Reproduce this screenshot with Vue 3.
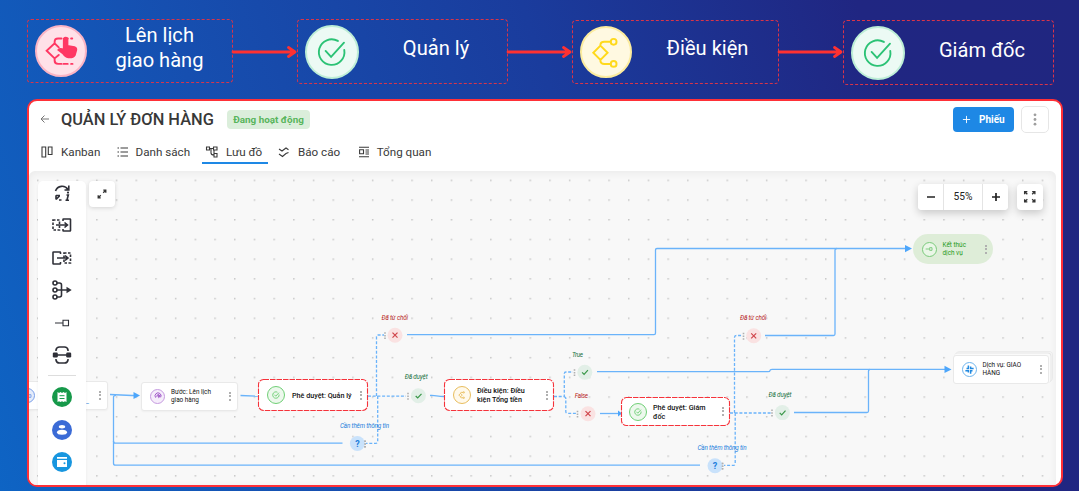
<template>
  <div class="page">
    <svg class="sprite">
      <symbol id="approve" viewBox="0 0 24 24">
        <path d="M21.2 10.5A9.6 9.6 0 1 1 16.4 3.7M7.2 11.2L11.3 15.6L21 5" />
      </symbol>
      <symbol id="branch" viewBox="0 0 24 24">
        <path d="M7.6 7L12.8 12.2L7.6 17.4L2.4 12.2ZM7.6 7V6Q8 4.2 10.3 4.2H15M7.6 17.4V18.4Q8 20.3 10.3 20.3H15" />
        <circle cx="17.2" cy="4.2" r="2.1" />
        <circle cx="17.2" cy="20.3" r="2.1" />
      </symbol>
      <symbol id="manual" viewBox="0 0 24 24">
        <path d="M7 17L1.2 11.5L7 6L10 9M7 6V5Q7 2.5 9.5 2.5H12M15 2.5H16.5M19 2.5H19.8M7 17V18.5Q7 21 9.5 21H12M7 17L10 14.5M13.5 21H16.5M19 21H20" />
        <path class="solid" d="M13.7 2.7Q15 1.2 16.3 2.7V8L21.4 8.8Q23 9.4 22.7 11L21.7 14.5Q20.5 16.5 17 16.2Q14.5 15.8 13.2 13.5L9.8 10.8Q11.2 9.4 13.7 11Z" />
      </symbol>
      <symbol id="spin" viewBox="0 0 24 24">
        <path d="M5 17A9 9 0 1 1 20 16M8 14Q9 6 15 8Q19 11 15 14M12 11L19 12L14 17Z" />
      </symbol>
      <symbol id="service" viewBox="0 0 24 24">
        <path d="M9 1V9H4M23 9H15V4M15 23V15H20M1 15H9V20" />
      </symbol>
      <symbol id="end" viewBox="0 0 24 24">
        <path d="M2 12H13M14 8H21V16H14Z" />
      </symbol>
    </svg>

    <header class="flow">
      <template v-for="(step, i) in steps" :key="i">
        <svg v-if="i" class="flow-arrow" viewBox="0 0 64 14">
          <path d="M0 7H62M55.5 2.5L62 7L55.5 11.5" />
        </svg>
        <div class="step" :class="'step-' + (i + 1)">
          <span class="step-icon" :class="step.icon">
            <svg><use :href="'#' + step.icon" /></svg>
          </span>
          <span class="step-name">{{ step.name }}</span>
        </div>
      </template>
    </header>

    <main class="window">
      <div class="title-row">
        <svg class="back" viewBox="0 0 12 12"><path d="M10 6H2M5.5 2.5L2 6L5.5 9.5" /></svg>
        <h1>QUẢN LÝ ĐƠN HÀNG</h1>
        <span class="badge">Đang hoạt động</span>
        <button class="primary">
          <svg viewBox="0 0 10 10"><path d="M5 1V9M1 5H9" /></svg>
          Phiếu
        </button>
        <button class="more">
          <svg viewBox="0 0 4 14">
            <circle cx="2" cy="2" r="1.5" /><circle cx="2" cy="7" r="1.5" /><circle cx="2" cy="12" r="1.5" />
          </svg>
        </button>
      </div>

      <nav class="tabs">
        <a class="tab kanban">
          <svg viewBox="0 0 14 12"><path d="M2 1H5.7V11H2ZM8.3 1H12V8.5H8.3Z" /></svg>Kanban
        </a>
        <a class="tab list">
          <svg viewBox="0 0 14 12"><path d="M4.5 2H12M4.5 6H12M4.5 10H12M1.5 2H3M1.5 6H3M1.5 10H3" /></svg>Danh sách
        </a>
        <a class="tab chart active">
          <svg viewBox="0 0 14 12">
            <path d="M1.5 1H4.5V4H1.5ZM8.5 1H12V4H8.5ZM9 7.5H12V11H9ZM4.5 2.5H8.5M6 2.5V7Q6 9 9 9M9 4V7.5" />
          </svg>Lưu đồ
        </a>
        <a class="tab report">
          <svg viewBox="0 0 14 12"><path d="M2 3L5 5L9 2L11.5 3.8M2 8L5.5 10.5L9 7.5L11.5 6.5" /></svg>Báo cáo
        </a>
        <a class="tab overview">
          <svg viewBox="0 0 14 12"><path d="M2 1.2H12M2.6 3.8H6.5V7.8H2.6ZM8.5 4H12M8.5 6H12M8.5 8H12M2 10.7H12" /></svg>Tổng quan
        </a>
      </nav>

      <section class="canvas">
        <svg class="layer" viewBox="29 171 1027 314">
          <defs>
            <pattern id="dots" x="37" y="179.6" width="19.7" height="19.7" patternUnits="userSpaceOnUse">
              <rect width="1.5" height="1.5" fill="#c6c6c6" />
            </pattern>
          </defs>
          <rect x="29" y="171" width="1027" height="314" fill="url(#dots)" />
          <path v-for="d in links" :key="d" class="link" :d="d" />
          <path v-for="d in branches" :key="d" class="link dashed" :d="d" />
        </svg>

        <div
          v-for="node in nodes"
          :key="node.id"
          class="node"
          :class="[node.kind, node.id]"
          :style="{ left: node.x - 29 + 'px', top: node.y - 171 + 'px', width: node.w + 'px', height: node.h + 'px' }"
        >
          <span class="node-icon" :class="node.icon"><svg><use :href="'#' + node.icon" /></svg></span>
          <span class="node-name">{{ node.name }}</span>
          <span class="kebab"></span>
        </div>

        <svg class="layer" viewBox="29 171 1027 314">
          <path v-for="d in heads" :key="d" class="head" :d="d" />
          <rect
            v-for="node in marked"
            :key="node.id"
            class="outline"
            :x="node.x + 0.5"
            :y="node.y + 0.5"
            :width="node.w - 1"
            :height="node.h - 1"
            rx="5"
          />
          <g v-for="o in outcomes" :key="o.x" class="outcome" :class="o.type">
            <path class="grip" :d="`M${o.gx} ${o.y - 3}v7`" />
            <circle :cx="o.x" :cy="o.y" r="7.5" />
            <path v-if="o.type === 'no'" :d="`M${o.x - 2.5} ${o.y - 2.5}l5 5m0 -5l-5 5`" />
            <path v-if="o.type === 'yes'" :d="`M${o.x - 2.7} ${o.y + 0.2}l2 2l3.8 -4.2`" />
            <text v-if="o.type === 'ask'" class="mark" :x="o.x" :y="o.y + 3.2">?</text>
            <path v-if="o.type === 'ask'" class="grip" :d="`M${o.gx} ${o.y - 3}v7`" />
            <text class="caption" :x="o.tx" :y="o.ty" :textLength="o.tw">{{ o.label }}</text>
          </g>
        </svg>

        <aside class="palette">
          <svg class="tool" viewBox="0 0 20 20">
            <path d="M3.5 8A7 7 0 0 1 16 6.5M16.8 2.5V7H12.5M4 16.5L7.5 13M4 12.3V16.5M4 12.5H8M7 17H9.5M14.5 12H16.3L15 17M13.5 17.3H17" />
            <circle class="fill" cx="16" cy="9.6" r="1.1" />
          </svg>
          <svg class="tool" viewBox="0 0 20 20">
            <path d="M4 10H15M12.5 7.5L15.5 10L12.5 12.5M11 6V4.5Q11 4 11.5 4H18Q18.5 4 18.5 4.5V15.5Q18.5 16 18 16H11.5Q11 16 11 15.5V14" />
            <path class="dash" d="M1 5H7.5V15H1Z" />
          </svg>
          <svg class="tool" viewBox="0 0 20 20">
            <path d="M8.5 6V4.5Q8.5 4 8 4H1.5Q1 4 1 4.5V15.5Q1 16 1.5 16H8Q8.5 16 8.5 15.5V14M5 10H15.5M13 7.5L16 10L13 12.5" />
            <path class="dash" d="M12 5H18.5V15H12Z" />
          </svg>
          <svg class="tool" viewBox="0 0 20 20">
            <circle cx="3" cy="3" r="2" /><circle cx="3" cy="10" r="2" /><circle cx="3" cy="17" r="2" />
            <path d="M5 3H7.5Q9.5 3 9.5 5V15Q9.5 17 7.5 17H5M5 10H16" />
            <path class="fill" d="M14.5 6.7L19.7 10L14.5 13.3Z" />
          </svg>
          <svg class="tool" viewBox="0 0 20 20"><path class="thin" d="M3 10H11M11 7.3H16.5V12.8H11Z" /></svg>
          <svg class="tool" viewBox="0 0 20 20">
            <path d="M4 6V5Q4.5 2 7.5 2H12.5Q15.5 2 16 5V6M4 14V15Q4.5 18 7.5 18H12.5Q15.5 18 16 15V14M4 10H16" />
            <rect class="fill" x="0.8" y="7.5" width="5" height="5" rx="1.2" />
            <rect class="fill" x="14.2" y="7.5" width="5" height="5" rx="1.2" />
          </svg>
          <hr />
          <span class="app green">
            <svg viewBox="0 0 20 20">
              <path class="white" d="M5.5 5L7 6L8.5 5L10 6L11.5 5L13 6L14.5 5V15L13 14.2L11.5 15L10 14.2L8.5 15L7 14.2L5.5 15Z" />
              <path class="line" d="M7.5 8.7H12.5M7.5 11.5H12.5" />
            </svg>
          </span>
          <span class="app blue">
            <svg viewBox="0 0 20 20">
              <ellipse class="white" cx="10" cy="6.8" rx="3.2" ry="1.7" /><ellipse class="white" cx="10" cy="12.2" rx="5" ry="2.5" />
            </svg>
          </span>
          <span class="app sky">
            <svg viewBox="0 0 20 20">
              <path class="white" d="M5 5H15V6.8H5ZM5 8H15V15H5Z" /><circle class="dot" cx="12.5" cy="11.2" r="1" />
            </svg>
          </span>
        </aside>

        <button class="tile collapse">
          <svg viewBox="0 0 12 12"><path d="M7.2 4.8L9.8 2.2M7.3 2.2H9.8V4.7M4.8 7.2L2.2 9.8M4.7 9.8H2.2V7.3" /></svg>
        </button>

        <div class="zoom">
          <button><svg viewBox="0 0 10 10"><path d="M1 5H9" /></svg></button>
          <span>{{ scale }}%</span>
          <button><svg viewBox="0 0 10 10"><path d="M1 5H9M5 1V9" /></svg></button>
        </div>
        <button class="tile fullscreen">
          <svg viewBox="0 0 14 14">
            <path d="M1.7 4.5V1.7H4.5M1.7 1.7L4.5 4.5M9.5 1.7H12.3V4.5M12.3 1.7L9.5 4.5M1.7 9.5V12.3H4.5M1.7 12.3L4.5 9.5M9.5 12.3H12.3V9.5M12.3 12.3L9.5 9.5" />
          </svg>
        </button>
      </section>
    </main>
  </div>
</template>

<script setup>
import { computed, ref } from 'vue';

const scale = ref(55);

const steps = [
  { name: 'Lên lịch\ngiao hàng', icon: 'manual' },
  { name: 'Quản lý', icon: 'approve' },
  { name: 'Điều kiện', icon: 'branch' },
  { name: 'Giám đốc', icon: 'approve' },
];

const nodes = ref([
  { id: 'start', kind: 'plain', icon: 'end', name: '..._', x: 11, y: 381, w: 97, h: 29 },
  { id: 'schedule', kind: 'plain', icon: 'spin', name: 'Bước: Lên lịch\ngiao hàng', x: 141, y: 381.5, w: 97, h: 29 },
  { id: 'manager', kind: 'marked', icon: 'approve', name: 'Phê duyệt: Quản lý', x: 258, y: 379, w: 110, h: 32 },
  { id: 'condition', kind: 'marked', icon: 'branch', name: 'Điều kiện: Điều\nkiện Tổng tiền', x: 444, y: 379, w: 110, h: 32 },
  { id: 'director', kind: 'marked', icon: 'approve', name: 'Phê duyệt: Giám\nđốc', x: 621, y: 397, w: 109, h: 29 },
  { id: 'finish', kind: 'pill', icon: 'end', name: 'Kết thúc\ndịch vụ', x: 912.5, y: 234, w: 80.5, h: 30 },
  { id: 'delivery', kind: 'plain', icon: 'service', name: 'Dịch vụ: GIAO\nHÀNG', x: 952.5, y: 355, w: 96, h: 28.5 },
]);

const marked = computed(() => nodes.value.filter((node) => node.kind === 'marked'));

const links = [
  'M110 394.5L132 395.5H136',
  'M116 395.3Q113.5 395.5 113.5 397V441.2Q113.5 443.2 115.5 443.2H342.5',
  'M113.5 441V463.2Q113.5 465.2 115.5 465.2H700',
  'M240.5 395.5L258 396.2',
  'M407 334.7H654Q655.5 334.7 655.5 333V250Q655.5 248.5 657 248.5H906',
  'M765 335.5H833.5Q835 335.5 835 334V250Q835 248.5 837 248.5',
  'M430 395.5C435 395 437 396.5 444 396.5',
  'M597 371.7H768Q770 371.7 770 370.5Q770 369.3 772 369.3H946',
  'M600 413.5H620',
  'M794 412.5H867Q868.5 412.5 868.5 411V371Q868.5 369.5 870 369.5',
];

const branches = [
  'M368 396.2H406M376.5 396V337Q376.5 335 378 335H384M377.7 396V441.5Q377.7 443.3 376 443.3H366',
  'M554 396.5H564.3V374Q564.3 372 566 372H573M564.3 396.5L565.8 398V411.5Q565.8 413.3 567.5 413.3H576',
  'M730 413H771M734.5 413V337.5Q734.5 335.5 736.5 335.5H742M735.2 413V463.5Q735.2 465.3 733.5 465.3H724',
];

const heads = ['M133.5 392L140 395.5L133.5 399Z', 'M905 245L912 248.6L905 252.2Z', 'M944.5 365.8L951.5 369.4L944.5 373Z', 'M618 410.5L622 413.5L618 416.5Z'];

const outcomes = [
  { type: 'no', x: 395, y: 335.2, gx: 385, label: 'Đã từ chối', tx: 381.5, ty: 319.5, tw: 26.5 },
  { type: 'yes', x: 418.4, y: 395.8, gx: 408, label: 'Đã duyệt', tx: 404.7, ty: 379.3, tw: 23 },
  { type: 'ask', x: 357.4, y: 443.5, gx: 365, label: 'Cần thêm thông tin', tx: 340, ty: 428, tw: 49 },
  { type: 'yes', x: 584.8, y: 372.2, gx: 574.5, label: 'True', tx: 572, ty: 356.5, tw: 11 },
  { type: 'no', x: 588, y: 413.7, gx: 577.5, label: 'False', tx: 574.7, ty: 397.6, tw: 13.3 },
  { type: 'no', x: 753.7, y: 335.8, gx: 743.5, label: 'Đã từ chối', tx: 740, ty: 319.5, tw: 26.5 },
  { type: 'yes', x: 782.4, y: 412.6, gx: 772, label: 'Đã duyệt', tx: 768.5, ty: 397, tw: 23 },
  { type: 'ask', x: 715, y: 465.7, gx: 722.5, label: 'Cần thêm thông tin', tx: 697.5, ty: 449.6, tw: 49 },
];
</script>

<style>
body {
  margin: 0;
}
</style>

<style scoped>
.page {
  position: relative;
  box-sizing: border-box;
  width: 1079px;
  height: 491px;
  overflow: hidden;
  padding: 19px 16px 0 27px;
  font-family: Roboto, "Liberation Sans", sans-serif;
  background: linear-gradient(72deg, #0e64c4 0%, #164fb0 26%, #1a3c9d 55%, #202682 82%, #202680 100%);
}
.sprite {
  position: absolute;
  width: 0;
  height: 0;
}
svg {
  display: block;
  fill: none;
  stroke: currentColor;
  overflow: visible;
}
button {
  padding: 0;
  border: 0;
  font-family: inherit;
  background: #fff;
}

/* top chain */
.flow {
  display: flex;
  align-items: flex-start;
  height: 80px;
}
.step {
  box-sizing: border-box;
  display: flex;
  align-items: center;
  width: 206px;
  height: 64px;
  padding-left: 7px;
  border: 1px dashed #d93449;
  border-radius: 4px;
}
.step-2 {
  width: 211px;
  height: 65px;
}
.step-3 {
  width: 207px;
  margin-top: 1px;
}
.step-4 {
  width: 211px;
  height: 65px;
  margin-top: 1px;
}
.step-icon {
  box-sizing: border-box;
  display: flex;
  align-items: center;
  justify-content: center;
  flex: none;
  width: 52px;
  height: 52px;
  border-radius: 50%;
}
.step-icon svg {
  width: 33px;
  height: 33px;
  stroke-width: 1.4;
  stroke-linecap: round;
}
.step-icon.manual {
  color: #ff3763;
  background: #ffe1e8;
  border: 2px solid #fbb4c4;
}
.step-icon.approve {
  width: 54px;
  height: 54px;
  color: #2bc275;
  background: #ecfaf4;
  border: 2px solid #bdeed6;
}
.step-icon.approve svg {
  width: 32px;
  height: 32px;
}
.step-icon.branch {
  color: #ffd91c;
  background: #fff9e1;
  border: 2px solid #fcec9e;
}
.solid {
  fill: currentColor;
}
.step-name {
  flex: 1;
  padding-bottom: 6px;
  font-size: 20.1px;
  line-height: 25.5px;
  text-align: center;
  white-space: pre-line;
  color: #fff;
}
.step-2 .step-name,
.step-4 .step-name {
  padding-left: 6px;
}
.step-3 .step-name {
  padding-left: 5px;
}
.step-4 .step-name {
  padding-bottom: 4px;
}
.flow-arrow {
  flex: none;
  width: 64px;
  height: 14px;
  margin-top: 25.5px;
  color: #ff3131;
  stroke-width: 2.8;
  stroke-linecap: round;
  stroke-linejoin: round;
}

/* application window */
.window {
  box-sizing: border-box;
  width: 1036px;
  height: 388px;
  overflow: hidden;
  border: 2px solid #ff3037;
  border-radius: 10px;
  background: #fff;
}
.title-row {
  display: flex;
  align-items: center;
  height: 26px;
  padding: 5px 12px 0 10px;
}
.back {
  width: 12px;
  height: 12px;
  color: #757575;
  margin-right: 10px;
}
h1 {
  margin: 0;
  padding-top: 1px;
  width: 153px;
  font-size: 16.4px;
  font-weight: 500;
  line-height: 20px;
  white-space: nowrap;
  color: #383838;
}
.badge {
  margin-left: 13px;
  width: 83px;
  height: 19px;
  border-radius: 4px;
  font-size: 9.9px;
  font-weight: 700;
  line-height: 19px;
  text-align: center;
  white-space: nowrap;
  color: #58b55c;
  background: #dbeedb;
}
.primary {
  display: flex;
  align-items: center;
  gap: 8px;
  box-sizing: border-box;
  width: 61px;
  height: 25px;
  margin-left: auto;
  padding-left: 9px;
  border-radius: 4px;
  font-size: 10px;
  font-weight: 700;
  color: #fff;
  background: #1e88e5;
}
.primary svg {
  width: 9px;
  height: 9px;
}
.more {
  display: flex;
  align-items: center;
  justify-content: center;
  box-sizing: border-box;
  width: 28px;
  height: 27px;
  margin-left: 7px;
  border: 1px solid #e6e6e6;
  border-radius: 5px;
}
.more svg {
  width: 4px;
  height: 13px;
  fill: #9e9e9e;
  stroke: none;
}
.tabs {
  display: flex;
  height: 32px;
  margin-top: 7px;
}
.tab {
  display: flex;
  align-items: center;
  box-sizing: border-box;
  height: 25px;
  font-size: 11.65px;
  white-space: nowrap;
  color: #3a3a3a;
}
.tab svg {
  flex: none;
  width: 14px;
  height: 12px;
  margin-right: 7px;
  stroke-width: 1.1;
}
.kanban {
  width: 75px;
  margin-left: 11px;
}
.list {
  width: 86px;
  padding-left: 1px;
}
.list svg {
  margin-right: 5.5px;
}
.chart {
  width: 66px;
  margin-left: 1px;
  padding-left: 3px;
  border-bottom: 2px solid #1e88e5;
  padding-top: 2px;
}
.report {
  margin-left: 9px;
}
.overview {
  margin-left: 16.5px;
}
.overview svg {
  margin-right: 6px;
}

/* diagram */
.canvas {
  position: relative;
  width: 1027px;
  height: 314px;
  overflow: hidden;
  border-radius: 6px 6px 0 0;
  background: #f8f8f8;
  box-shadow: inset 0 2px 9px rgba(0, 0, 0, 0.06);
}
.layer {
  position: absolute;
  left: 0;
  top: 0;
  width: 1027px;
  height: 314px;
  stroke: none;
}
.link {
  stroke: #6ab3fa;
  stroke-width: 1.3;
}
.dashed {
  stroke-dasharray: 3 1.7;
}
.head {
  fill: #4da6fb;
}
.outline {
  stroke: #f5333b;
  stroke-width: 1.1;
  stroke-dasharray: 5.5 1;
}
.node {
  position: absolute;
  box-sizing: border-box;
  display: flex;
  align-items: center;
  border-radius: 3px;
  background: #fff;
}
.plain {
  padding-left: 8px;
  border: 1px solid #e9e9e9;
  box-shadow: 0 1px 2px rgba(0, 0, 0, 0.04);
}
.marked {
  padding: 0 1px 0 9px;
  border-radius: 5px;
}
.pill {
  padding-left: 9px;
  border-radius: 15px;
  background: #deedd8;
}
.delivery {
  box-shadow: 1.5px -1.5px 0 #fafafa, 2px -2px 0 0.5px #e6e6e6, 3px -3px 0 #f9f9f9, 3.3px -3.3px 0 0.5px #e8e8e8;
}
.node-icon {
  display: flex;
  align-items: center;
  justify-content: center;
  box-sizing: border-box;
  flex: none;
  width: 15px;
  height: 15px;
  margin-right: 6px;
  border: 1px solid;
  border-radius: 50%;
}
.node-icon svg {
  width: 8px;
  height: 8px;
  stroke-width: 2.8;
}
.marked .node-icon {
  width: 18px;
  height: 18px;
  margin-right: 7px;
}
.marked .node-icon.branch {
  margin-right: 6px;
}
.director .node-icon {
  margin-left: -1px;
  margin-right: 6px;
}
.node-icon.approve {
  color: #6fcf75;
  background: #edf8ed;
}
.node-icon.branch {
  color: #e8bd5d;
  background: #fff9eb;
}
.node-icon.spin {
  color: #9b51c5;
  border-color: #c69be0;
  background: #f6edfb;
}
.node-icon.service {
  color: #2189df;
  border-color: #6db4ee;
}
.service svg {
  width: 9px;
  height: 9px;
  stroke-width: 4;
}
.node-icon.end {
  color: #7ac97b;
  background: #eaf6e7;
}
.start .node-icon {
  color: #7a9fe8;
  background: #e5ecfa;
}
.node-name {
  flex: 1;
  font-size: 6.4px;
  line-height: 8px;
  font-weight: 400;
  white-space: pre;
  color: #111;
}
.marked .node-name {
  font-size: 7.2px;
  line-height: 9px;
  font-weight: 500;
}
.pill .node-name {
  color: #1f9a22;
}
.start .node-name {
  padding: 10px 0 0 40px;
  color: #378bdc;
}
.kebab {
  width: 2px;
  height: 9px;
  margin-right: 6px;
  background: repeating-linear-gradient(#b0b0b0 0 1.8px, transparent 1.8px 3.4px);
}
.marked .kebab {
  margin-right: 5px;
}
.grip {
  stroke: #b0b0b0;
  stroke-width: 1.6;
  stroke-dasharray: 1.5 1.2;
}
.outcome path:not(.grip) {
  stroke: currentColor;
  stroke-width: 1.2;
}
.no {
  color: #d0454b;
}
.no circle {
  fill: #fae2e2;
}
.yes {
  color: #399748;
}
.yes circle {
  fill: #e2efe7;
}
.ask {
  color: #1e7fdc;
}
.ask circle {
  fill: #c9e2fb;
}
.mark {
  fill: currentColor;
  font-size: 9px;
  font-weight: 700;
  text-anchor: middle;
}
.caption {
  fill: currentColor;
  font-size: 6.3px;
  font-style: italic;
}
.no .caption {
  fill: #b71c1c;
}
.yes .caption {
  fill: #17703f;
}

/* controls over the diagram */
.palette {
  position: absolute;
  left: 9px;
  top: 10px;
  display: flex;
  flex-direction: column;
  align-items: center;
  width: 47.5px;
  height: 310px;
  border-radius: 5px;
  color: #2f3038;
  background: #fff;
  box-shadow: 0 1px 3px rgba(0, 0, 0, 0.06);
}
.tool {
  flex: none;
  width: 20px;
  height: 20px;
  margin: 2px 0 10.4px;
  stroke-width: 1.6;
}
.dash {
  stroke-dasharray: 2.5 1.5;
}
.thin {
  stroke-width: 1.1;
}
.fill {
  fill: currentColor;
  stroke: none;
}
.palette hr {
  width: 28px;
  height: 1px;
  margin: 0 0 11px;
  border: 0;
  background: #ddd;
}
.app {
  flex: none;
  width: 20px;
  height: 20px;
  margin-bottom: 12.5px;
  border-radius: 50%;
}
.app svg {
  stroke: none;
}
.white {
  fill: #fff;
}
.line {
  stroke: #18a04f;
}
.green {
  background: #16994a;
}
.blue {
  background: #3b6bd6;
}
.sky {
  background: #1896df;
}
.dot {
  fill: #1896df;
}
.tile {
  position: absolute;
  display: flex;
  align-items: center;
  justify-content: center;
  width: 26px;
  height: 26px;
  border-radius: 4px;
  color: #333;
  box-shadow: 0 1px 4px rgba(0, 0, 0, 0.15);
}
.collapse {
  left: 60px;
  top: 10px;
}
.collapse svg {
  width: 12px;
  height: 12px;
  stroke-width: 1.3;
}
.zoom {
  position: absolute;
  left: 889px;
  top: 13px;
  display: flex;
  width: 90px;
  height: 26px;
  border-radius: 4px;
  background: #fff;
  box-shadow: 0 3px 9px rgba(0, 0, 0, 0.2);
}
.zoom button {
  display: flex;
  align-items: center;
  justify-content: center;
  width: 25px;
  border-radius: 4px;
}
.zoom svg {
  width: 10px;
  height: 10px;
  color: #222;
  stroke-width: 1.7;
}
.zoom span {
  flex: 1;
  border: solid #e4e4e4;
  border-width: 0 1px;
  font-size: 10.2px;
  line-height: 26px;
  text-align: center;
  color: #222;
}
.fullscreen {
  left: 988px;
  top: 13px;
  box-shadow: 0 3px 9px rgba(0, 0, 0, 0.2);
}
.fullscreen svg {
  width: 13.5px;
  height: 13.5px;
  stroke-width: 1.4;
}
</style>
